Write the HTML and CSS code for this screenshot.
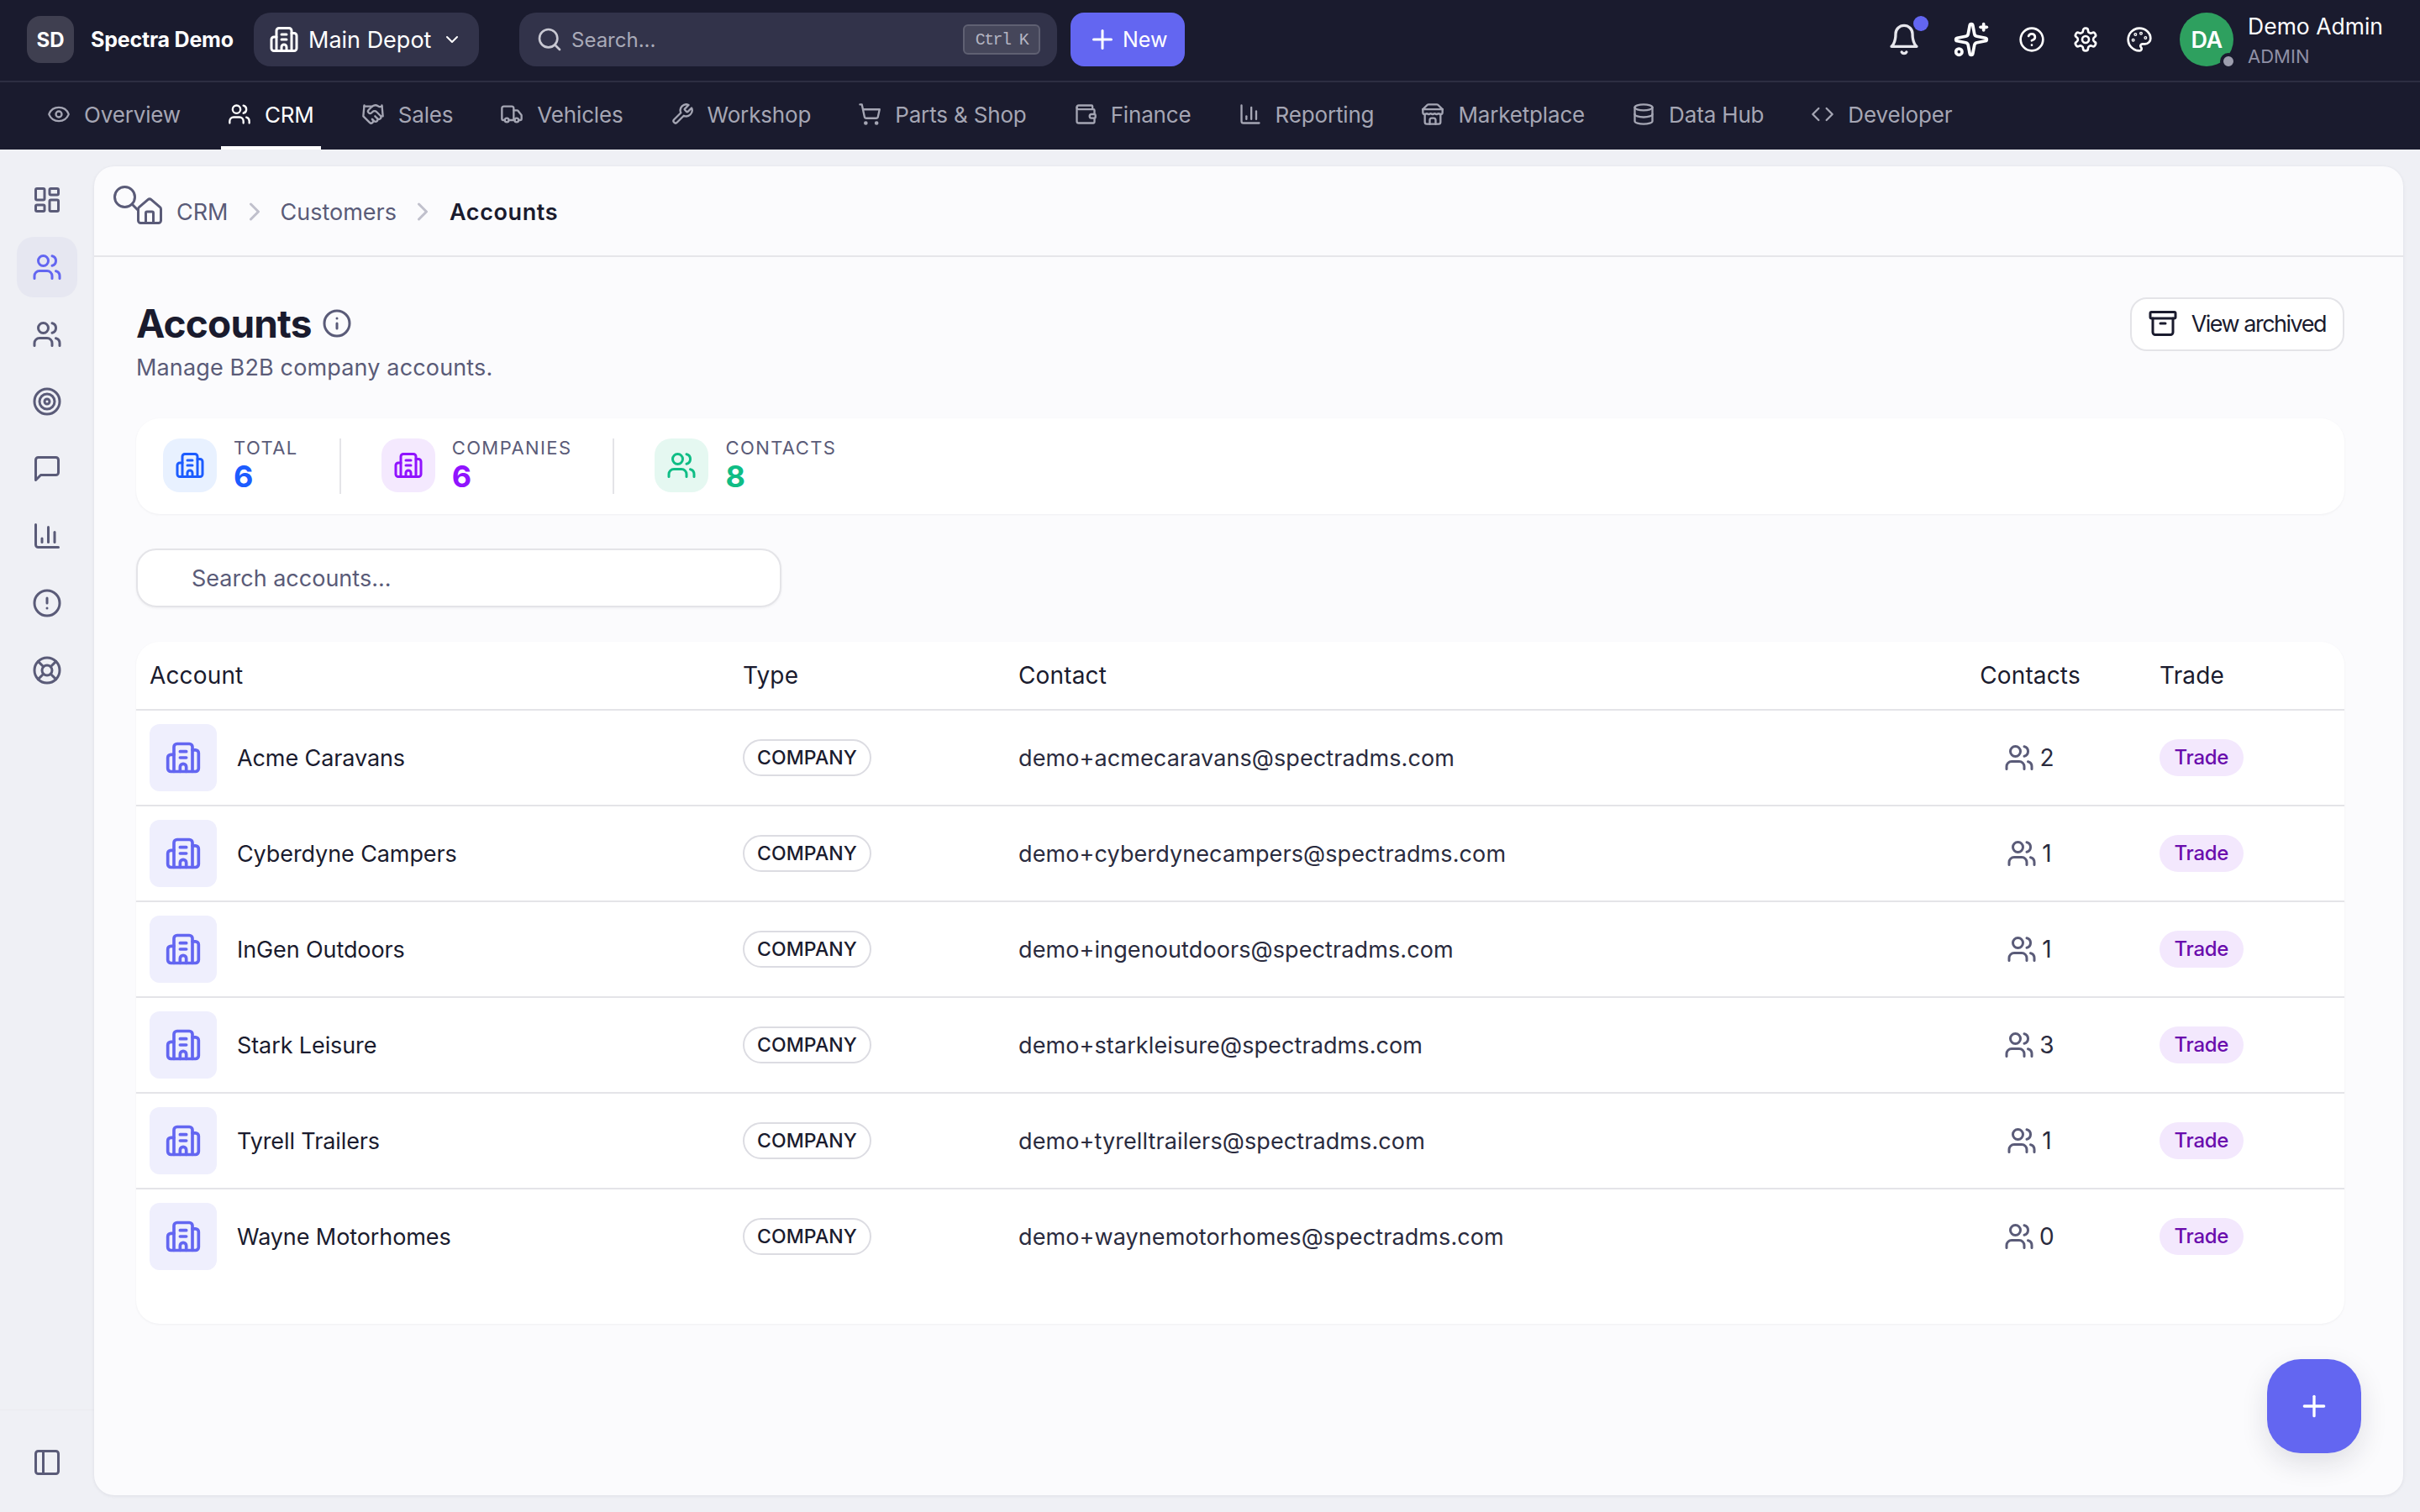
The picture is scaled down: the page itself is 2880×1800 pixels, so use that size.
FILE: index.html
```html
<!doctype html>
<html>
  <head>
    <meta charset="utf-8">
    <meta name="viewport" content="width=device-width, initial-scale=1">
    <title>Accounts - Spectra Demo</title>
    <link rel="stylesheet" href="styles.css">
  </head>
  <body>
    <svg class="sprite" xmlns="http://www.w3.org/2000/svg">
      <symbol id="i-building" viewBox="0 0 24 24"><path d="M10 12h4"/><path d="M10 8h4"/><path d="M14 21v-3a2 2 0 0 0-4 0v3"/><path d="M6 10H4a2 2 0 0 0-2 2v7a2 2 0 0 0 2 2h16a2 2 0 0 0 2-2V9a2 2 0 0 0-2-2h-2"/><path d="M6 21V5a2 2 0 0 1 2-2h8a2 2 0 0 1 2 2v16"/></symbol>
      <symbol id="i-users" viewBox="0 0 24 24"><path d="M16 21v-2a4 4 0 0 0-4-4H6a4 4 0 0 0-4 4v2"/><circle cx="9" cy="7" r="4"/><path d="M22 21v-2a4 4 0 0 0-3-3.87"/><path d="M16 3.13a4 4 0 0 1 0 7.75"/></symbol>
      <symbol id="i-dashboard" viewBox="0 0 24 24"><rect x="3" y="3" width="7" height="9" rx="1"/><rect x="14" y="3" width="7" height="5" rx="1"/><rect x="14" y="12" width="7" height="9" rx="1"/><rect x="3" y="16" width="7" height="5" rx="1"/></symbol>
      <symbol id="i-target" viewBox="0 0 24 24"><circle cx="12" cy="12" r="10"/><circle cx="12" cy="12" r="6"/><circle cx="12" cy="12" r="2"/></symbol>
      <symbol id="i-message" viewBox="0 0 24 24"><path d="M21 15a2 2 0 0 1-2 2H7l-4 4V5a2 2 0 0 1 2-2h14a2 2 0 0 1 2 2z"/></symbol>
      <symbol id="i-chart" viewBox="0 0 24 24"><path d="M3 3v16a2 2 0 0 0 2 2h16"/><path d="M18 17V9"/><path d="M13 17V5"/><path d="M8 17v-3"/></symbol>
      <symbol id="i-alert" viewBox="0 0 24 24"><circle cx="12" cy="12" r="10"/><path d="M12 8v4"/><path d="M12 16h.01"/></symbol>
      <symbol id="i-lifebuoy" viewBox="0 0 24 24"><circle cx="12" cy="12" r="10"/><path d="m4.93 4.93 4.24 4.24"/><path d="m14.83 9.17 4.24-4.24"/><path d="m14.83 14.83 4.24 4.24"/><path d="m9.17 14.83-4.24 4.24"/><circle cx="12" cy="12" r="4"/></symbol>
      <symbol id="i-panel" viewBox="0 0 24 24"><rect x="3" y="3" width="18" height="18" rx="2"/><path d="M9 3v18"/></symbol>
      <symbol id="i-archive" viewBox="0 0 24 24"><rect x="2" y="3" width="20" height="5" rx="1"/><path d="M4 8v11a2 2 0 0 0 2 2h12a2 2 0 0 0 2-2V8"/><path d="M10 12h4"/></symbol>
      <symbol id="i-search" viewBox="0 0 24 24"><path d="m21 21-4.3-4.3"/><circle cx="11" cy="11" r="8"/></symbol>
      <symbol id="i-bell" viewBox="0 0 24 24"><path d="M6 8a6 6 0 0 1 12 0c0 7 3 9 3 9H3s3-2 3-9"/><path d="M10.3 21a1.94 1.94 0 0 0 3.4 0"/></symbol>
      <symbol id="i-sparkles" viewBox="0 0 24 24"><path d="M11.017 2.814a1 1 0 0 1 1.966 0l1.051 5.558a2 2 0 0 0 1.594 1.594l5.558 1.051a1 1 0 0 1 0 1.966l-5.558 1.051a2 2 0 0 0-1.594 1.594l-1.051 5.558a1 1 0 0 1-1.966 0l-1.051-5.558a2 2 0 0 0-1.594-1.594l-5.558-1.051a1 1 0 0 1 0-1.966l5.558-1.051a2 2 0 0 0 1.594-1.594z"/><path d="M20 2v4"/><path d="M22 4h-4"/><circle cx="4" cy="20" r="2"/></symbol>
      <symbol id="i-help" viewBox="0 0 24 24"><circle cx="12" cy="12" r="10"/><path d="M9.09 9a3 3 0 0 1 5.83 1c0 2-3 3-3 3"/><path d="M12 17h.01"/></symbol>
      <symbol id="i-settings" viewBox="0 0 24 24"><path d="M12.22 2h-.44a2 2 0 0 0-2 2v.18a2 2 0 0 1-1 1.73l-.43.25a2 2 0 0 1-2 0l-.15-.08a2 2 0 0 0-2.73.73l-.22.38a2 2 0 0 0 .73 2.73l.15.1a2 2 0 0 1 1 1.72v.51a2 2 0 0 1-1 1.74l-.15.09a2 2 0 0 0-.73 2.73l.22.38a2 2 0 0 0 2.73.73l.15-.08a2 2 0 0 1 2 0l.43.25a2 2 0 0 1 1 1.73V20a2 2 0 0 0 2 2h.44a2 2 0 0 0 2-2v-.18a2 2 0 0 1 1-1.73l.43-.25a2 2 0 0 1 2 0l.15.08a2 2 0 0 0 2.73-.73l.22-.39a2 2 0 0 0-.73-2.73l-.15-.08a2 2 0 0 1-1-1.74v-.5a2 2 0 0 1 1-1.74l.15-.09a2 2 0 0 0 .73-2.73l-.22-.38a2 2 0 0 0-2.73-.73l-.15.08a2 2 0 0 1-2 0l-.43-.25a2 2 0 0 1-1-1.73V4a2 2 0 0 0-2-2z"/><circle cx="12" cy="12" r="3"/></symbol>
      <symbol id="i-palette" viewBox="0 0 24 24"><path d="M12 22a1 1 0 0 1 0-20 10 9 0 0 1 10 9 5 5 0 0 1-5 5h-2.25a1.75 1.75 0 0 0-1.4 2.8l.3.4a1.75 1.75 0 0 1-1.4 2.8z"/><circle cx="13.5" cy="6.5" r=".5"/><circle cx="17.5" cy="10.5" r=".5"/><circle cx="6.5" cy="12.5" r=".5"/><circle cx="8.5" cy="7.5" r=".5"/></symbol>
      <symbol id="i-eye" viewBox="0 0 24 24"><path d="M2.062 12.348a1 1 0 0 1 0-.696 10.75 10.75 0 0 1 19.876 0 1 1 0 0 1 0 .696 10.75 10.75 0 0 1-19.876 0"/><circle cx="12" cy="12" r="3"/></symbol>
      <symbol id="i-handshake" viewBox="0 0 24 24"><path d="m11 17 2 2a1 1 0 1 0 3-3"/><path d="m14 14 2.5 2.5a1 1 0 1 0 3-3l-3.88-3.88a3 3 0 0 0-4.24 0l-.88.88a1 1 0 1 1-3-3l2.81-2.81a5.79 5.79 0 0 1 7.06-.87l.47.28a2 2 0 0 0 1.42.25L21 4"/><path d="m21 3 1 11h-2"/><path d="M3 3 2 14l6.5 6.5a1 1 0 1 0 3-3"/><path d="M3 4h8"/></symbol>
      <symbol id="i-truck" viewBox="0 0 24 24"><path d="M14 18V6a2 2 0 0 0-2-2H4a2 2 0 0 0-2 2v11a1 1 0 0 0 1 1h2"/><path d="M15 18H9"/><path d="M19 18h2a1 1 0 0 0 1-1v-3.65a1 1 0 0 0-.22-.624l-3.48-4.35A1 1 0 0 0 17.52 8H14"/><circle cx="17" cy="18" r="2"/><circle cx="7" cy="18" r="2"/></symbol>
      <symbol id="i-wrench" viewBox="0 0 24 24"><path d="M14.7 6.3a1 1 0 0 0 0 1.4l1.6 1.6a1 1 0 0 0 1.4 0l3.77-3.77a6 6 0 0 1-7.94 7.94l-6.91 6.91a2.12 2.12 0 0 1-3-3l6.91-6.91a6 6 0 0 1 7.94-7.94l-3.76 3.76z"/></symbol>
      <symbol id="i-cart" viewBox="0 0 24 24"><circle cx="8" cy="21" r="1"/><circle cx="19" cy="21" r="1"/><path d="M2.05 2.05h2l2.66 12.42a2 2 0 0 0 2 1.58h9.78a2 2 0 0 0 1.95-1.57l1.65-7.43H5.12"/></symbol>
      <symbol id="i-wallet" viewBox="0 0 24 24"><path d="M19 7V4a1 1 0 0 0-1-1H5a2 2 0 0 0 0 4h15a1 1 0 0 1 1 1v4h-3a2 2 0 0 0 0 4h3a1 1 0 0 0 1-1v-2a1 1 0 0 0-1-1"/><path d="M3 5v14a2 2 0 0 0 2 2h15a1 1 0 0 0 1-1v-4"/></symbol>
      <symbol id="i-store" viewBox="0 0 24 24"><path d="m2 7 4.41-4.41A2 2 0 0 1 7.83 2h8.34a2 2 0 0 1 1.42.59L22 7"/><path d="M4 12v8a2 2 0 0 0 2 2h12a2 2 0 0 0 2-2v-8"/><path d="M15 22v-4a2 2 0 0 0-2-2h-2a2 2 0 0 0-2 2v4"/><path d="M2 7h20"/><path d="M22 7v3a2 2 0 0 1-2 2a2.7 2.7 0 0 1-1.59-.63.7.7 0 0 0-.82 0A2.7 2.7 0 0 1 16 12a2.7 2.7 0 0 1-1.59-.63.7.7 0 0 0-.82 0A2.7 2.7 0 0 1 12 12a2.7 2.7 0 0 1-1.59-.63.7.7 0 0 0-.82 0A2.7 2.7 0 0 1 8 12a2.7 2.7 0 0 1-1.59-.63.7.7 0 0 0-.82 0A2.7 2.7 0 0 1 4 12a2 2 0 0 1-2-2V7"/></symbol>
      <symbol id="i-database" viewBox="0 0 24 24"><ellipse cx="12" cy="5" rx="9" ry="3"/><path d="M3 5V19A9 3 0 0 0 21 19V5"/><path d="M3 12A9 3 0 0 0 21 12"/></symbol>
      <symbol id="i-code" viewBox="0 0 24 24"><path d="m16 18 6-6-6-6"/><path d="m8 6-6 6 6 6"/></symbol>
      <symbol id="i-house" viewBox="0 0 24 24"><path d="M15 21v-8a1 1 0 0 0-1-1h-4a1 1 0 0 0-1 1v8"/><path d="M3 10a2 2 0 0 1 .709-1.528l7-5.999a2 2 0 0 1 2.582 0l7 5.999A2 2 0 0 1 21 10v9a2 2 0 0 1-2 2H5a2 2 0 0 1-2-2z"/></symbol>
      <symbol id="i-info" viewBox="0 0 24 24"><circle cx="12" cy="12" r="10"/><path d="M12 16v-4"/><path d="M12 8h.01"/></symbol>
      <symbol id="i-right" viewBox="0 0 24 24"><path d="m9 18 6-6-6-6"/></symbol>
      <symbol id="i-down" viewBox="0 0 24 24"><path d="m6 9 6 6 6-6"/></symbol>
      <symbol id="i-plus" viewBox="0 0 24 24"><path d="M5 12h14"/><path d="M12 5v14"/></symbol>
    </svg>

    <div class="app">
      <header class="topbar">
        <div class="logo">SD</div>
        <div class="brand">Spectra Demo</div>
        <div class="depot">
          <svg class="icon icon-36"><use href="#i-building"/></svg>
          <span class="depot-name">Main Depot</span>
          <svg class="icon icon-24"><use href="#i-down"/></svg>
        </div>
        <div class="global-search">
          <svg class="icon icon-32"><use href="#i-search"/></svg>
          <span class="global-search-text">Search...</span>
          <kbd class="kbd">Ctrl K</kbd>
        </div>
        <button class="new-btn">
          <svg class="icon icon-36"><use href="#i-plus"/></svg>
          New
        </button>
        <div class="top-actions">
          <span class="bell">
            <svg class="icon icon-40"><use href="#i-bell"/></svg>
            <span class="bell-dot"></span>
          </span>
          <svg class="icon icon-44 sparkle"><use href="#i-sparkles"/></svg>
          <svg class="icon icon-32"><use href="#i-help"/></svg>
          <svg class="icon icon-32"><use href="#i-settings"/></svg>
          <svg class="icon icon-32"><use href="#i-palette"/></svg>
        </div>
        <div class="user">
          <div class="avatar">DA<span class="avatar-dot"></span></div>
          <div class="user-text">
            <div class="user-name">Demo Admin</div>
            <div class="user-role">ADMIN</div>
          </div>
        </div>
      </header>

      <nav class="navbar">
        <a class="nav-item"><svg class="icon icon-28"><use href="#i-eye"/></svg>Overview</a>
        <a class="nav-item active"><svg class="icon icon-28"><use href="#i-users"/></svg>CRM</a>
        <a class="nav-item"><svg class="icon icon-28"><use href="#i-handshake"/></svg>Sales</a>
        <a class="nav-item"><svg class="icon icon-28"><use href="#i-truck"/></svg>Vehicles</a>
        <a class="nav-item"><svg class="icon icon-28"><use href="#i-wrench"/></svg>Workshop</a>
        <a class="nav-item"><svg class="icon icon-28"><use href="#i-cart"/></svg>Parts &amp; Shop</a>
        <a class="nav-item"><svg class="icon icon-28"><use href="#i-wallet"/></svg>Finance</a>
        <a class="nav-item"><svg class="icon icon-28"><use href="#i-chart"/></svg>Reporting</a>
        <a class="nav-item"><svg class="icon icon-28"><use href="#i-store"/></svg>Marketplace</a>
        <a class="nav-item"><svg class="icon icon-28"><use href="#i-database"/></svg>Data Hub</a>
        <a class="nav-item"><svg class="icon icon-28"><use href="#i-code"/></svg>Developer</a>
      </nav>

      <div class="workspace">
        <aside class="sidebar">
          <a class="side-item"><svg class="icon icon-36"><use href="#i-dashboard"/></svg></a>
          <a class="side-item active"><svg class="icon icon-36"><use href="#i-users"/></svg></a>
          <a class="side-item"><svg class="icon icon-36"><use href="#i-users"/></svg></a>
          <a class="side-item"><svg class="icon icon-36"><use href="#i-target"/></svg></a>
          <a class="side-item"><svg class="icon icon-36"><use href="#i-message"/></svg></a>
          <a class="side-item"><svg class="icon icon-36"><use href="#i-chart"/></svg></a>
          <a class="side-item"><svg class="icon icon-36"><use href="#i-alert"/></svg></a>
          <a class="side-item"><svg class="icon icon-36"><use href="#i-lifebuoy"/></svg></a>
          <div class="side-foot">
            <a class="side-item"><svg class="icon icon-36"><use href="#i-panel"/></svg></a>
          </div>
        </aside>

        <main class="panel">
          <div class="crumbs">
            <svg class="icon icon-36 crumbs-search"><use href="#i-search"/></svg>
            <svg class="icon icon-36 crumbs-home"><use href="#i-house"/></svg>
            <span>CRM</span>
            <svg class="icon icon-36 crumbs-sep"><use href="#i-right"/></svg>
            <span>Customers</span>
            <svg class="icon icon-36 crumbs-sep"><use href="#i-right"/></svg>
            <span class="crumbs-current">Accounts</span>
          </div>

          <div class="page">
            <div class="page-head">
              <div>
                <h1 class="page-title">Accounts <svg class="icon icon-36"><use href="#i-info"/></svg></h1>
                <p class="page-sub">Manage B2B company accounts.</p>
              </div>
              <button class="ghost-btn">
                <svg class="icon icon-36"><use href="#i-archive"/></svg>
                View archived
              </button>
            </div>

            <section class="stats">
              <div class="stat stat-blue">
                <div class="stat-icon"><svg class="icon icon-36"><use href="#i-building"/></svg></div>
                <div>
                  <div class="stat-label">TOTAL</div>
                  <div class="stat-value">6</div>
                </div>
              </div>
              <div class="stat stat-purple">
                <div class="stat-icon"><svg class="icon icon-36"><use href="#i-building"/></svg></div>
                <div>
                  <div class="stat-label">COMPANIES</div>
                  <div class="stat-value">6</div>
                </div>
              </div>
              <div class="stat stat-green">
                <div class="stat-icon"><svg class="icon icon-36"><use href="#i-users"/></svg></div>
                <div>
                  <div class="stat-label">CONTACTS</div>
                  <div class="stat-value">8</div>
                </div>
              </div>
            </section>

            <input class="search-input" type="text" placeholder="Search accounts...">

            <section class="table-card">
              <table class="accounts">
                <colgroup>
                  <col class="col-account">
                  <col class="col-type">
                  <col class="col-contact">
                  <col class="col-count">
                  <col class="col-trade">
                </colgroup>
                <thead>
                  <tr>
                    <th>Account</th>
                    <th>Type</th>
                    <th>Contact</th>
                    <th class="cell-count">Contacts</th>
                    <th>Trade</th>
                  </tr>
                </thead>
                <tbody>
                  <tr>
                    <td><div class="account"><span class="account-icon"><svg class="icon icon-44"><use href="#i-building"/></svg></span>Acme Caravans</div></td>
                    <td><span class="type-pill">COMPANY</span></td>
                    <td>demo+acmecaravans@spectradms.com</td>
                    <td class="cell-count"><span class="count"><svg class="icon icon-36"><use href="#i-users"/></svg>2</span></td>
                    <td><span class="trade-pill">Trade</span></td>
                  </tr>
                  <tr>
                    <td><div class="account"><span class="account-icon"><svg class="icon icon-44"><use href="#i-building"/></svg></span>Cyberdyne Campers</div></td>
                    <td><span class="type-pill">COMPANY</span></td>
                    <td>demo+cyberdynecampers@spectradms.com</td>
                    <td class="cell-count"><span class="count"><svg class="icon icon-36"><use href="#i-users"/></svg>1</span></td>
                    <td><span class="trade-pill">Trade</span></td>
                  </tr>
                  <tr>
                    <td><div class="account"><span class="account-icon"><svg class="icon icon-44"><use href="#i-building"/></svg></span>InGen Outdoors</div></td>
                    <td><span class="type-pill">COMPANY</span></td>
                    <td>demo+ingenoutdoors@spectradms.com</td>
                    <td class="cell-count"><span class="count"><svg class="icon icon-36"><use href="#i-users"/></svg>1</span></td>
                    <td><span class="trade-pill">Trade</span></td>
                  </tr>
                  <tr>
                    <td><div class="account"><span class="account-icon"><svg class="icon icon-44"><use href="#i-building"/></svg></span>Stark Leisure</div></td>
                    <td><span class="type-pill">COMPANY</span></td>
                    <td>demo+starkleisure@spectradms.com</td>
                    <td class="cell-count"><span class="count"><svg class="icon icon-36"><use href="#i-users"/></svg>3</span></td>
                    <td><span class="trade-pill">Trade</span></td>
                  </tr>
                  <tr>
                    <td><div class="account"><span class="account-icon"><svg class="icon icon-44"><use href="#i-building"/></svg></span>Tyrell Trailers</div></td>
                    <td><span class="type-pill">COMPANY</span></td>
                    <td>demo+tyrelltrailers@spectradms.com</td>
                    <td class="cell-count"><span class="count"><svg class="icon icon-36"><use href="#i-users"/></svg>1</span></td>
                    <td><span class="trade-pill">Trade</span></td>
                  </tr>
                  <tr>
                    <td><div class="account"><span class="account-icon"><svg class="icon icon-44"><use href="#i-building"/></svg></span>Wayne Motorhomes</div></td>
                    <td><span class="type-pill">COMPANY</span></td>
                    <td>demo+waynemotorhomes@spectradms.com</td>
                    <td class="cell-count"><span class="count"><svg class="icon icon-36"><use href="#i-users"/></svg>0</span></td>
                    <td><span class="trade-pill">Trade</span></td>
                  </tr>
                </tbody>
              </table>
            </section>
          </div>

          <button class="fab"><svg class="icon icon-40"><use href="#i-plus"/></svg></button>
        </main>
      </div>
    </div>
  </body>
</html>
```

FILE: styles.css
```css
* {
  box-sizing: border-box;
}
html, body {
  height: 100%;
}
body {
  margin: 0;
  font-family: Inter, "Noto Sans", sans-serif;
  font-size: 27px;
  color: #1a1b2e;
  background: #eff0f5;
  overflow: hidden;
}
.sprite {
  display: none;
}
.icon {
  flex: none;
  fill: none;
  stroke: currentColor;
  stroke-width: 2;
  stroke-linecap: round;
  stroke-linejoin: round;
}
.icon-24 { width: 24px; height: 24px; }
.icon-28 { width: 28px; height: 28px; }
.icon-32 { width: 32px; height: 32px; }
.icon-36 { width: 36px; height: 36px; }
.icon-40 { width: 40px; height: 40px; }
.icon-44 { width: 44px; height: 44px; }

.app {
  display: flex;
  flex-direction: column;
  height: 100%;
}

/* top bar */
.topbar {
  display: flex;
  align-items: center;
  height: 98px;
  padding: 0 44px 2px 32px;
  background: #1a1b2e;
  border-bottom: 2px solid #2d2e42;
  color: #fff;
}
.logo {
  display: flex;
  align-items: center;
  justify-content: center;
  width: 56px;
  height: 56px;
  border-radius: 16px;
  background: #3f3f50;
  font-size: 24px;
  font-weight: 700;
}
.brand {
  width: 194px;
  margin-left: 20px;
  font-size: 25px;
  font-weight: 700;
  letter-spacing: -0.2px;
  white-space: nowrap;
}
.depot {
  display: flex;
  align-items: center;
  width: 268px;
  height: 64px;
  padding: 0 20px 0 18px;
  border-radius: 20px;
  background: #32334a;
  white-space: nowrap;
}
.depot-name {
  flex: 1;
  margin-left: 11px;
}
.global-search {
  display: flex;
  align-items: center;
  gap: 10px;
  width: 640px;
  height: 64px;
  margin-left: 48px;
  padding: 0 20px;
  border-radius: 20px;
  background: #32334a;
  color: #c8c8d2;
}
.global-search-text {
  flex: 1;
  font-size: 24px;
  color: #a9aab8;
}
.kbd {
  display: flex;
  align-items: center;
  justify-content: center;
  width: 92px;
  height: 36px;
  border: 2px solid #5f6072;
  border-radius: 6px;
  background: #45465a;
  font-family: "Liberation Mono", monospace;
  font-size: 20px;
  letter-spacing: -1.6px;
  color: #b4b5c2;
}
.new-btn {
  display: flex;
  align-items: center;
  gap: 6px;
  width: 136px;
  height: 64px;
  margin-left: 16px;
  padding: 0 0 0 20px;
  border: none;
  border-radius: 16px;
  background: #6366f1;
  font: inherit;
  font-size: 25px;
  color: #fff;
}
.top-actions {
  display: flex;
  align-items: center;
  gap: 32px;
  margin-left: auto;
}
.bell {
  position: relative;
  display: flex;
  margin-right: 6px;
  color: #e6e6ec;
}
.bell-dot {
  position: absolute;
  top: -8px;
  right: -9px;
  width: 18px;
  height: 18px;
  border-radius: 50%;
  background: #6366f1;
}
.sparkle {
  margin-right: 2px;
}
.user {
  display: flex;
  align-items: center;
  gap: 17px;
  margin-left: 32px;
}
.avatar {
  position: relative;
  display: flex;
  align-items: center;
  justify-content: center;
  width: 64px;
  height: 64px;
  border-radius: 50%;
  background: #2ea05f;
  font-size: 27px;
  font-weight: 600;
  letter-spacing: -0.5px;
}
.avatar-dot {
  position: absolute;
  right: -4px;
  bottom: -4px;
  width: 20px;
  height: 20px;
  border: 4px solid #1a1b2e;
  border-radius: 50%;
  background: #9d9eae;
}
.user-text {
  margin-top: 4px;
}
.user-name {
  font-size: 26.5px;
  line-height: 36px;
  white-space: nowrap;
}
.user-role {
  font-size: 22px;
  line-height: 36px;
  color: #8f90a6;
}

/* module nav */
.navbar {
  display: flex;
  gap: 40px;
  height: 80px;
  padding: 0 48px;
  background: #1a1b2e;
}
.nav-item {
  display: flex;
  align-items: center;
  gap: 16px;
  padding: 0 8px;
  border-bottom: 4px solid transparent;
  font-size: 26px;
  letter-spacing: -0.16px;
  color: #a5a6b4;
  white-space: nowrap;
}
.nav-item.active {
  border-bottom-color: #fff;
  color: #fff;
}

/* sidebar */
.workspace {
  display: flex;
  flex: 1;
  min-height: 0;
}
.sidebar {
  display: flex;
  flex-direction: column;
  align-items: center;
  width: 112px;
  padding-top: 20px;
}
.side-item {
  display: flex;
  align-items: center;
  justify-content: center;
  flex: none;
  width: 72px;
  height: 72px;
  margin: 4px 0;
  border-radius: 20px;
  color: #5a5b78;
}
.side-item.active {
  background: #e6e7f1;
  color: #6366f1;
}
.side-foot {
  display: flex;
  justify-content: center;
  width: 100%;
  height: 122px;
  margin-top: auto;
  padding-top: 22px;
  border-top: 1px solid #ebebf0;
}

/* main panel */
.panel {
  position: relative;
  flex: 1;
  margin: 20px 20px 20px 0;
  border-radius: 24px;
  background: #fbfbfd;
  box-shadow: 0 1px 4px rgba(26, 27, 46, 0.08);
}
.crumbs {
  position: relative;
  display: flex;
  align-items: center;
  height: 108px;
  padding: 2px 0 0 48px;
  border-bottom: 2px solid #e6e6ea;
  color: #5a5b78;
}
.crumbs-search {
  position: absolute;
  top: 20px;
  left: 20px;
}
.crumbs-home {
  margin-right: 14px;
}
.crumbs-sep {
  margin: 0 13px;
  color: #c0c0cc;
}
.crumbs-current {
  margin-left: 1px;
  font-weight: 600;
  letter-spacing: 0.6px;
  color: #1a1b2e;
}
.page {
  padding: 48px 70px 0 50px;
}
.page-head {
  display: flex;
  justify-content: space-between;
  align-items: flex-start;
}
.page-title {
  display: flex;
  align-items: center;
  gap: 12px;
  margin: 0;
  font-size: 46px;
  line-height: 62px;
  font-weight: 700;
  letter-spacing: -0.8px;
}
.page-title .icon {
  color: #5a5b78;
}
.page-sub {
  margin: 0;
  line-height: 44px;
  letter-spacing: 0.15px;
  color: #5a5b78;
}
.ghost-btn {
  display: flex;
  align-items: center;
  gap: 16px;
  height: 64px;
  padding: 0 20px 2px 19px;
  border: 2px solid #e4e4e8;
  border-radius: 20px;
  background: #fff;
  font: inherit;
  letter-spacing: -1.5px;
  color: #1a1b2e;
}

/* stats */
.stats {
  display: flex;
  height: 114px;
  margin-top: 38px;
  padding: 24px 32px;
  border-radius: 28px;
  background: #fff;
  box-shadow: 0 1px 3px rgba(26, 27, 46, 0.05);
}
.stat {
  display: flex;
  gap: 20px;
  margin-right: 48px;
  padding-right: 49px;
  border-right: 2px solid #e4e4e8;
}
.stat:last-child {
  border-right: none;
}
.stat-icon {
  display: flex;
  align-items: center;
  justify-content: center;
  width: 64px;
  height: 64px;
  border-radius: 20px;
}
.stat-label {
  margin-top: -4px;
  font-size: 22px;
  line-height: 30px;
  letter-spacing: 1.4px;
  color: #5a5b78;
}
.stat-value {
  font-size: 36px;
  line-height: 38px;
  font-weight: 700;
}
.stat-blue .stat-icon { background: #e8f1ff; }
.stat-blue .icon, .stat-blue .stat-value { color: #1c5cff; }
.stat-purple .stat-icon { background: #f4e9fe; }
.stat-purple .icon, .stat-purple .stat-value { color: #9013fe; }
.stat-green .stat-icon { background: #e5f8f1; }
.stat-green .icon, .stat-green .stat-value { color: #0fbd85; }

/* search */
.search-input {
  display: block;
  width: 768px;
  height: 70px;
  margin-top: 41px;
  padding: 0 64px;
  border: 2px solid #e4e4e8;
  border-radius: 24px;
  background: #fff;
  font: inherit;
  color: #1a1b2e;
  outline: none;
  box-shadow: 0 1px 3px rgba(26, 27, 46, 0.06);
}
.search-input::placeholder {
  color: #5a5b78;
  opacity: 1;
}

/* table */
.table-card {
  margin-top: 41px;
  padding-bottom: 48px;
  border-radius: 28px;
  background: #fff;
  box-shadow: 0 1px 3px rgba(26, 27, 46, 0.05);
}
.accounts {
  width: 100%;
  table-layout: fixed;
  border-collapse: separate;
  border-spacing: 0;
}
.col-account { width: 706px; }
.col-type { width: 328px; }
.col-contact { width: 1144px; }
.col-count { width: 214px; }
.col-trade { width: 236px; }
.accounts th {
  height: 82px;
  padding: 0 16px;
  border-bottom: 2px solid #e4e4e8;
  font-size: 28px;
  font-weight: 400;
  letter-spacing: 0.15px;
  text-align: left;
}
.accounts td {
  padding: 16px;
  border-bottom: 2px solid #e4e4e8;
  letter-spacing: 0.1px;
  color: #2a2b3e;
}
.accounts tbody tr:last-child td {
  border-bottom: none;
}
.accounts th.cell-count {
  padding-right: 78px;
  text-align: center;
}
.accounts td.cell-count {
  padding-right: 80px;
}
.account {
  display: flex;
  align-items: center;
  gap: 24px;
  letter-spacing: -0.1px;
  color: #1a1b2e;
}
.account-icon {
  display: flex;
  align-items: center;
  justify-content: center;
  width: 80px;
  height: 80px;
  border-radius: 12px;
  background: #efeffd;
  color: #6366f1;
}
.type-pill {
  display: inline-block;
  height: 44px;
  padding: 0 15px;
  border: 2px solid #dcdce2;
  border-radius: 22px;
  font-size: 23px;
  line-height: 40px;
  font-weight: 500;
  color: #1a1b2e;
}
.count {
  display: flex;
  align-items: center;
  justify-content: center;
  gap: 6px;
  font-size: 28px;
}
.count .icon {
  color: #5a5b78;
}
.trade-pill {
  display: inline-block;
  height: 44px;
  padding: 0 17.5px;
  border-radius: 22px;
  background: #f3e8fd;
  font-size: 24px;
  line-height: 44px;
  font-weight: 500;
  letter-spacing: -0.3px;
  color: #6a0dad;
}

/* floating add button */
.fab {
  position: absolute;
  right: 50px;
  bottom: 50px;
  display: flex;
  align-items: center;
  justify-content: center;
  width: 112px;
  height: 112px;
  border: none;
  border-radius: 40px;
  background: #6366f1;
  color: #fff;
  box-shadow: 0 12px 32px rgba(26, 27, 46, 0.12);
}
```
